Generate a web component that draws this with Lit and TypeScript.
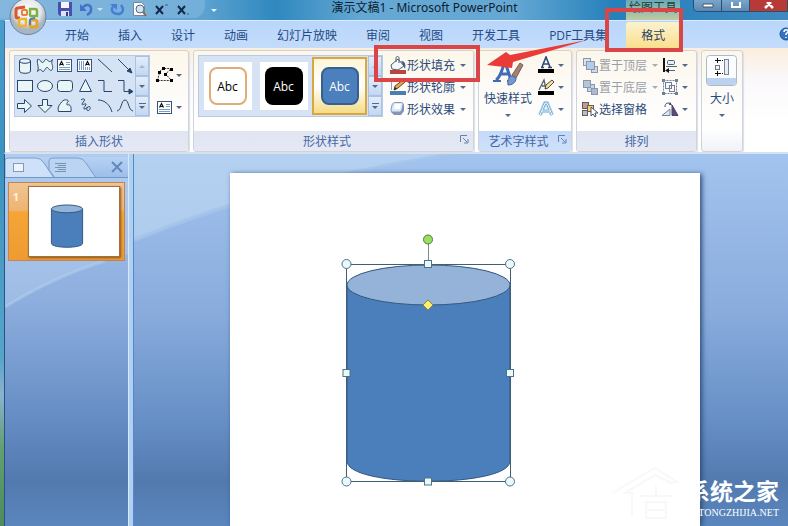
import { LitElement, html, svg, css, SVGTemplateResult, TemplateResult } from "lit";
import { customElement, property, state } from "lit/decorators.js";
import { classMap } from "lit/directives/class-map.js";

const icon = (w: number, h: number, body: SVGTemplateResult) =>
  html`<svg width=${w} height=${h} viewBox="0 0 ${w} ${h}" aria-hidden="true">${body}</svg>`;

const textLines = svg`<rect x="2.500" y="3.500" width="14" height="12" fill="#fff" stroke="#33557f"/>
  <path d="M4 11.500h11M4 13.500h11M11 6.500h4M11 8.500h4" stroke="#7c9cc4"/>
  <path d="M4.500 9.500l2-4 2 4M5.500 8.500h2" fill="none" stroke="#111" stroke-width="1.200"/>`;

const shapes: { name: string; art: SVGTemplateResult }[] = [
  { name: "圆柱形", art: svg`<path d="M4.500 5v10c0 3 11 3 11 0V5c0-3-11-3-11 0c0 3 11 3 11 0"/>` },
  { name: "波形", art: svg`<path d="M2.500 3.500c3-1 3 3 5 3s2-4 4-3s3 4 6 0c-2 4 1 6 0 9c-1 4-3 1-5-1c-2-1-3 5-5 4c-1-2-3-3-5 0c2-5-1-8 0-12z"/>` },
  { name: "文本框", art: textLines },
  { name: "垂直文本框", art: svg`<rect x="2.500" y="3.500" width="14" height="12" fill="#fff" stroke="#33557f"/>
    <path d="M4.500 5v9M6.500 5v9M8.500 5v9M10.500 11v3M12.500 11v3M14.500 11v3" stroke="#7c9cc4"/>
    <path d="M10.500 9.500l2-4 2 4M11.500 8.500h2" fill="none" stroke="#111" stroke-width="1.200"/>` },
  { name: "直线", art: svg`<path fill="none" d="M3 3l14 13"/>` },
  { name: "箭头", art: svg`<path fill="none" d="M3 3l12 12"/><path d="M17 17l-5-2 3-3z" fill="#26466f"/>` },
  { name: "矩形", art: svg`<rect x="2.500" y="4.500" width="15" height="11"/>` },
  { name: "椭圆", art: svg`<ellipse cx="10" cy="10" rx="7.500" ry="5.500"/>` },
  { name: "圆角矩形", art: svg`<rect x="2.500" y="4.500" width="15" height="11" rx="3"/>` },
  { name: "等腰三角形", art: svg`<path d="M10.500 3.500l6 12h-12z"/>` },
  { name: "肘形连接符", art: svg`<path fill="none" d="M3 4.500h6v11h8"/>` },
  { name: "肘形箭头连接符", art: svg`<path fill="none" d="M3 4.500h6v11h5"/><path d="M18 15.500l-4-2.500v5z" fill="#26466f"/>` },
  { name: "右箭头", art: svg`<path d="M2.500 7.500h7v-4l7 6.500-7 6.500v-4h-7z"/>` },
  { name: "下箭头", art: svg`<path d="M7.500 3.500h5v6h4.500l-7 7-7-7h4.500z"/>` },
  { name: "任意多边形", art: svg`<path d="M5.500 7.500c3-5 7-4 8-2.500c-2 2-2 4-1 4c3-1 4 2 3.500 6.500h-12.500c-1-3 0-6 2-8z"/>` },
  { name: "自由曲线", art: svg`<path fill="none" d="M6 4c2-2 5-1 3 1l-2 3c0 2 3-1 4 0s-3 3-2 5c1 1 5-4 6-2s-2 5-3 3 1-3 0-3"/>` },
  { name: "弧形", art: svg`<path fill="none" d="M3 4c7 0 12 5 14 12"/>` },
  { name: "曲线", art: svg`<path fill="none" d="M2 15c5-1 4-11 8-11s3 10 8 11"/>` },
];

const bucket = icon(18, 18, svg`<path d="M2 9l7-6 6 7-6 4-6-1z" fill="#f3f6fa" stroke="#4b5a6e"/>
  <path d="M7 6V2c0-2 3-2 3 0v5" fill="none" stroke="#4b5a6e"/><path d="M12 5c4 0 5 3 4 8l-2-4z" fill="#435d86"/>
  <path d="M1 14h16v4H1z" fill="#b9453f"/>`);
const outline = icon(18, 18, svg`<path d="M2.500 12V3.500H14" fill="none" stroke="#8da5c4"/>
  <path d="M5 12l1-4 8-6 2 2-7 6z" fill="#f0a548" stroke="#5b4630"/><path d="M5 12l1-3 2 2z" fill="#222"/>
  <path d="M1 13h16v4H1z" fill="#4a7eae"/>`);
const effect = icon(18, 18, svg`<path d="M2 12l3 3h7l3-4V4z" fill="#4d6796" opacity=".7"/>
  <path d="M5.500 2.500h7q2 0 1.500 2l-1 5q-.5 2-2.500 2.500h-7q-2 0-1.500-2l1-5q.5-2 2.500-2.500z" fill="#dce8f8" stroke="#8299c1"/><path d="M6 4h6l-1 5H5z" fill="#fff"/>`);
const textFill = icon(18, 18, svg`<path d="M5 11l4-10 4 10M6 8h6M4 11.500h3M11 11.500h4" fill="none" stroke="#2e4b7c" stroke-width="1.600"/><path d="M1 13h16v4H1z" fill="#000"/>`);
const textOutline = icon(18, 18, svg`<path d="M2 12L7 2l2 9M5 8h5" fill="none" stroke="#59616c" stroke-width="1.300"/>
  <path d="M8 11l1-4 6-5 2 2-6 6z" fill="#f4dfa6" stroke="#5b4630"/><path d="M1 13h16v4H1z" fill="#000"/>`);
const textEffect = icon(18, 18, svg`<path d="M3 15L8 3h2l5 12M5 11h8" fill="none" stroke="#a9d2ec" stroke-width="4" stroke-linejoin="round"/>
  <path d="M3 15L8 3h2l5 12M5 11h8" fill="none" stroke="#5f9dc9" stroke-width="2"/><path d="M3 15L8 3h2l5 12M5 11h8" fill="none" stroke="#fff" stroke-width="1"/>`);
const bringFront = icon(18, 18, svg`<g stroke="#8797ad"><rect x="2.500" y="2.500" width="7" height="7" fill="#dde3ec"/>
  <rect x="10.500" y="10.500" width="6" height="6" fill="#d3dae5"/><rect x="5.500" y="5.500" width="8" height="8" fill="#b4cbea"/></g>`);
const sendBack = icon(18, 18, svg`<g stroke="#8797ad"><rect x="6.500" y="6.500" width="7" height="7" fill="#c2d3ea"/>
  <rect x="2.500" y="2.500" width="7" height="7" fill="#b7c5d9"/><rect x="10.500" y="10.500" width="6" height="6" fill="#a9bad2"/></g>`);
const selectPane = icon(18, 18, svg`<g stroke="#665a5a"><rect x="1.500" y="2.500" width="6" height="6" fill="#bd9a9f"/>
  <rect x="1.500" y="10.500" width="5" height="5" fill="#b5bdc9"/><rect x="6.500" y="5.500" width="6" height="6" fill="#ffcf62"/></g>
  <path d="M10 7v9l2-2 2 3 1-1-1-3h3z" fill="#fff" stroke="#46556b"/>`);
const align = icon(18, 18, svg`<path d="M3 2v14" stroke="#111" stroke-width="2"/><rect x="6.500" y="4.500" width="7" height="4" rx="1" fill="#e8eef7" stroke="#4d6283"/>
  <path d="M5 10.500h11M8 14.500h6" stroke="#4d6283"/><path d="M4 14.500l4-2.500v5z" fill="#111"/>`);
const groupIcon = icon(18, 18, svg`<g fill="none" stroke="#6c7f9b"><path d="M2.500 2.500h13v13h-13z" stroke-dasharray="2 1"/><rect x="4.500" y="4.500" width="6" height="6"/><rect x="8.500" y="7.500" width="5" height="6"/></g>
  <path d="M1 1h3v3H1zM14 1h3v3h-3zM1 14h3v3H1zM14 14h3v3h-3z" fill="#6c7f9b"/>`);
const rotateIcon = icon(18, 18, svg`<path d="M1 15.500h8V9z" fill="#dce5f0" stroke="#74849b"/><path d="M11 15.500h6L11 5z" fill="#5c4a80" stroke="#4a4268"/><path d="M4 7c0-4 3-5 6-3" fill="none" stroke="#334866"/><path d="M11 5L9 2 8 5z" fill="#334866"/>`);
const editPoints = icon(18, 18, svg`<path d="M2.500 14.500L5 5l3-2.500h8.500l-6 5.500 6 6.500z" fill="none" stroke="#333" stroke-dasharray="2 1"/>
  <path d="M1 13h3v3H1zM3 5h3v3H3zM7 1h3v3H7zM15 2h3v3h-3zM9 7h3v3H9zM15 13h3v3h-3z" fill="#000"/>`);
const textBox = icon(18, 18, textLines);
const wordArt = icon(32, 32, svg`<path d="M4 25c5-3 6-12 9-18l6 18M8 19h9" fill="none" stroke="#3f6db5" stroke-width="3"/>
  <path d="M1 26h8M15 26h7" stroke="#3f6db5" stroke-width="2"/>
  <path d="M20 20L28 8l3 2-7 13z" fill="#a5806c" stroke="#77605a"/><path d="M16 30c-1-6 2-10 5-9l3 2c0 5-4 7-8 7z" fill="#7797cf" stroke="#49659e"/>`);
const sizeIcon = icon(32, 32, svg`<rect x=".5" y=".5" width="30" height="30" rx="3" fill="#fbfcfe" stroke="#aab9cf"/><path d="M1 23h29v4q0 3-3 3H4q-3 0-3-3z" fill="#bcd2ee"/>
  <path d="M14 5.500h5M14 18.500h5" stroke="#111" stroke-dasharray="1 1"/><path d="M9 5.500h5M11.500 3v5M9 18.500h5M11.500 16v5" stroke="#111"/>
  <rect x="9.500" y="10.500" width="4" height="4" fill="#eef3fa" stroke="#777"/><rect x="18.500" y="4.500" width="4" height="15" fill="#e8eef6" stroke="#7a8798"/>`);
const launcher = icon(9, 9, svg`<path d="M.5 7V.5H7M3 3l4 4M8 4v4H4" fill="none" stroke="#6482ad"/>`);

const quickIcons: { name: string; art: TemplateResult }[] = [
  { name: "保存", art: icon(16, 16, svg`<path d="M1 1h14v14H3l-2-2z" fill="#4a4fae"/><path d="M4 1h8v6H4z" fill="#f4f6ff"/><path d="M4 10h8v5H4z" fill="#dfe4f2"/><path d="M9 11h2v4H9z" fill="#333c86"/>`) },
  { name: "撤消", art: icon(24, 16, svg`<path d="M3 8c3-6 10-5 9 1c0 3-2 4-4 5" fill="none" stroke="#3f74cd" stroke-width="2.500"/><path d="M1 3v7h7z" fill="#3f74cd"/><path d="M18 7h6l-3 3z" fill="#c9e4f7"/>`) },
  { name: "恢复", art: icon(16, 16, svg`<path d="M5 4c-5 6 0 9 4 9s7-4 3-9" fill="none" stroke="#4580d4" stroke-width="2.500"/><path d="M1 3h7v6z" fill="#4580d4"/>`) },
  { name: "打印预览", art: icon(16, 16, svg`<path d="M2.500 1.500h8l3 3v10h-11z" fill="#fff" stroke="#7a8797"/><circle cx="9" cy="8" r="4" fill="#cfe5f6" stroke="#53697f"/><path d="M12 11l3 4" stroke="#8c6a43" stroke-width="2"/>`) },
  { name: "上标", art: icon(16, 16, svg`<path d="M3 5l7 8M10 5l-7 8" stroke="#122a48" stroke-width="2"/><path d="M12 4h3" stroke="#335d91"/>`) },
  { name: "下标", art: icon(16, 16, svg`<path d="M3 5l7 8M10 5l-7 8" stroke="#122a48" stroke-width="2"/><path d="M12 13h2" stroke="#335d91"/>`) },
];

// A can drawn in a 470 x 353 slide; shared by the slide and its thumbnail.
const can = svg`<path d="M117 112v176c0 27 163 27 163 0V112z" fill="#4a7fbc" stroke="#31577f"/>
  <ellipse cx="198.500" cy="112" rx="81.500" ry="20" fill="#95b2d8" stroke="#31577f"/>`;

@customElement("ribbon-group")
class RibbonGroup extends LitElement {
  @property() label = "";
  @property({ type: Boolean }) launch = false;
  @property({ type: Boolean, reflect: true }) hot = false;
  static styles = css`
    :host { display: flex; flex-direction: column; box-sizing: border-box; height: 102px; border: 1px solid #cfd3da; border-radius: 3px;
      background: linear-gradient(#fdf7ea, #fdfbf8 40%, #fff 78%, #f0f2f8); box-shadow: 1px 1px 1px #dcdfe6; overflow: hidden; }
    .body { flex: 1; display: flex; align-items: flex-start; padding: 3px 4px 0; min-height: 0; }
    footer { display: flex; align-items: center; justify-content: center; height: 20px; background: linear-gradient(#dfe5f1, #e6e9f5); color: #4668a4; font-size: 12px; }
    :host([hot]) footer { background: linear-gradient(#c4dafa, #cfe1fb); }
    span { flex: 1; text-align: center; }
    button { border: 0; padding: 0; margin: 0 4px 4px 0; background: none; line-height: 0; }
  `;
  render() {
    return html`<div class="body"><slot></slot></div>
      ${this.label ? html`<footer><span>${this.label}</span>${this.launch ? html`<button aria-label="${this.label}设置">${launcher}</button>` : ""}</footer>` : ""}`;
  }
}

@customElement("app-root")
class AppRoot extends LitElement {
  @state() private tab = "格式";
  @state() private style_ = 2;

  static styles = css`
    :host { display: flex; flex-direction: column; position: relative; box-sizing: border-box; min-height: 100vh; overflow: hidden; padding-left: 4px;
      background: linear-gradient(#4aa0cd, #3b93c0 30%, #56a5c8 68%, #8cb2cf 75%, #62a070 85%, #4c8b5b);
      font-family: "Open Sans", "Noto Sans CJK SC", sans-serif; font-size: 12px; color: #2a4a7a; }
    svg { display: block; flex: none; }
    button { font: inherit; color: inherit; border: 0; padding: 0; margin: 0; background: none; display: flex; align-items: center; white-space: nowrap; }
    .caret { flex: none; border: 3px solid transparent; border-top-color: #52698d; border-bottom: 0; margin: 0 3px; }

    .titlebar { display: flex; height: 20px; margin-left: -4px; background: linear-gradient(90deg, #7bb2da, #5ba2d0 26%, #2f88bf 35%, #66a8d4 46%, #65a8d4 65%, #2580bb 78%, #3e8ac0); }
    .quick { display: flex; gap: 6px; align-items: center; height: 18px; padding: 0 14px 0 57px; border-radius: 0 0 12px 0; background: #8cbce180; }
    .more { padding: 0 6px; }
    .more .caret { border-top-color: #e8f4fc; margin: 0; }
    h1 { flex: 1; margin: 0; text-align: center; font-family: "Noto Sans", "Noto Sans CJK SC", sans-serif; font-size: 12px; font-weight: 400; line-height: 16px; color: #0c1c2e; }
    .context { width: 54px; text-align: center; line-height: 16px; color: #24402e; background: linear-gradient(#68a9bd, #c0cba0); }
    .window { display: flex; height: 11px; margin-left: 13px; border: 1px solid #2b4d70; border-top: 0; border-right: 0; border-radius: 0 0 0 5px; overflow: hidden; }
    .window button { width: 28px; height: 11px; justify-content: center; background: linear-gradient(#7ba6ca, #5a88b3); border-right: 1px solid #2b4d70; }
    .window .close { width: 38px; background: #b83a36; padding-right: 0; }

    .tabs { display: flex; align-items: flex-end; height: 28px; padding-left: 46px; border-top: 1px solid #dcecfc; border-left: 1px solid #3d6ea5; background: linear-gradient(#b8d6fb, #c4dcfb); box-sizing: border-box; }
    .tabs button { height: 26px; padding: 0 14px; color: #234a86; margin-right: 1px; }
    .tabs .active { margin-left: 4px; padding: 0 15px; border-radius: 3px 3px 0 0; background: linear-gradient(#fbf2cf, #fbdf8d); color: #2c4463; }
    .help { margin-left: auto; }
    .tabs .help { padding: 0; margin-right: -5px; }

    .ribbon { display: flex; gap: 4px; height: 106px; padding: 2px 4px 0; box-sizing: border-box; background: linear-gradient(#fbeedd, #faf8fb 30%, #fff 70%); border-bottom: 2px solid #d4e2f2; border-left: 1px solid #3d6ea5; }
    .g-shapes { width: 180px; } .g-styles { width: 281px; } .g-art { width: 94px; } .g-arrange { width: 121px; } .g-size { width: 42px; }
    .gallery { display: flex; box-sizing: border-box; height: 62px; margin-top: 1px; border: 1px solid #b9cbe4; background: #d5e3f5; }
    .grid { display: grid; grid-template-columns: repeat(6, 20px); grid-auto-rows: 20px; }
    .grid svg { fill: #eaf6f6; stroke: #26466f; }
    .scroll { display: grid; grid-template-rows: repeat(3, 20px); width: 14px; }
    .scroll button { justify-content: center; border: 1px solid #a9c1e2; background: linear-gradient(#e3edfa, #c3d7f3); }
    .scroll .caret { margin: 0; }
    .scroll button:first-child .caret { transform: rotate(180deg); opacity: .35; }
    .scroll button:last-child { flex-direction: column; gap: 2px; }
    .scroll button:last-child::before { content: ""; width: 7px; height: 1px; background: #52698d; }
    .side { display: flex; flex-direction: column; gap: 14px; padding: 12px 0 0 5px; }
    .swatches { gap: 1px; padding-left: 1px; }
    .swatch { width: 55px; height: 58px; justify-content: center; margin-top: 1px; border: 2px solid transparent; box-sizing: border-box; }
    .swatch.chosen { border-color: #d9a73f; background: linear-gradient(#fff5d8, #fff, #f4dc85); }
    .frame { display: grid; place-items: center; width: 48px; height: 48px; background: #fff; }
    .chosen .frame { background: none; }
    .chip { box-sizing: border-box; width: 38px; height: 38px; display: grid; place-items: center; border-radius: 8px; font-size: 12px; }
    .light { border: 2px solid #dfad77; background: #fff; color: #000; }
    .dark { background: #000; color: #fff; }
    .blue { border: 2px solid #38608e; background: #4b7fbd; color: #fff; }
    .rows { display: flex; flex-direction: column; }
    .rows button { height: 22px; }
    .rows .off { color: #9a9ea6; }
    .rows .off .caret { border-top-color: #a9adb4; }
    .rows span + .caret { margin-left: 5px; }
    .fills { padding-left: 6px; }
    .big { flex-direction: column; width: 48px; margin-left: 1px; }
    .big svg { margin-top: 1px; }
    .big span { line-height: 18px; padding: 3px 0 6px; }
    .big .caret { padding: 0; }
    .g-size .big { width: 32px; margin-left: 0; }
    .art-rows { padding-left: 5px; }

    main { flex: 1; display: flex; min-height: 0; border-left: 1px solid #2b5288; }
    .pane { position: relative; width: 123px; padding-top: 3px; border-right: 1px solid #d7e9fb; background: linear-gradient(#a6c6ee, #8fb0df 38%, #678ec5 70%, #527aaf 88%, #5a86be); }
    .pane-tabs { display: flex; align-items: stretch; justify-content: space-between; height: 20px; border-bottom: 1px solid #4f79b5; background: linear-gradient(#b1cff3, #8eb2e4); overflow: hidden; }
    .pane-tabs button { padding: 0 4px 0 0; }
    .thumb { position: relative; display: flex; margin: 4px 3px; padding: 3px 4px 4px 0; border: 1px solid #c08553; background: linear-gradient(#efc593, #eeb473 35%, #f5a536 38%, #ee9b31); box-sizing: border-box; height: 79px; align-items: stretch; }
    .thumb b { width: 14px; font-size: 11px; color: #fff3d2; margin-top: 4px; align-self: flex-start; text-align: center; line-height: 14px; }
    .thumb svg { flex: 1; min-width: 0; margin-left: 5px; height: 71px; background: #fff; border: 1px solid #a2703c; box-sizing: border-box; box-shadow: 1px 1px 2px #8d5621; }
    .splitter { width: 4px; background: #b0d0f3; border-right: 1px solid #5586c8; }
    .work { flex: 1; display: flex; justify-content: center; align-items: flex-start; padding: 19px 0 0 8px; min-width: 0; background: linear-gradient(#a3c4ee, #8aacdd 42%, #668fc6 72%, #527aaf 88%, #5a86be); position: relative; }
    .wave { position: absolute; left: 0; top: 0; }
    .slide { position: relative; width: 73%; max-width: 470px; aspect-ratio: 470 / 353; background: #fff; box-shadow: 2px 1px 5px #2b4b78; }
    .slide svg { width: 100%; height: auto; }
    .orb { position: absolute; left: 8px; top: -3px; }
    .callouts { position: absolute; left: 0; top: 0; pointer-events: none; }
    .mark { position: absolute; right: 9px; bottom: 7px; display: flex; flex-direction: column; align-items: flex-end; color: #fff; }
    .mark b { font: 700 23px/34px "Noto Sans CJK SC", sans-serif; }
    .mark span { font: 10px/12px "Liberation Serif", serif; }
    .house { position: absolute; right: 88px; bottom: 0; }
  `;

  private caret = html`<span class="caret"></span>`;

  private row(label: string, art: TemplateResult, off = false, caret = true) {
    return html`<button class=${classMap({ off })} aria-label=${label}>${art}<span>${label}</span>${caret ? html`<span class="caret"></span>` : ""}</button>`;
  }
  private small(name: string, art: TemplateResult) {
    return html`<button aria-label=${name}>${art}${this.caret}</button>`;
  }
  private scroller() {
    return html`<div class="scroll">${["上一行", "下一行", "其他"].map((n) => html`<button aria-label=${n}>${this.caret}</button>`)}</div>`;
  }

  render() {
    const tabs = ["开始", "插入", "设计", "动画", "幻灯片放映", "审阅", "视图", "开发工具", "PDF工具集", "格式"];
    return html`
      <header class="titlebar">
        <div class="quick">${quickIcons.map((q) => html`<button aria-label=${q.name}>${q.art}</button>`)}</div>
        <button class="more" aria-label="自定义快速访问工具栏">${this.caret}</button>
        <h1>演示文稿1 - Microsoft PowerPoint</h1>
        <div class="context">绘图工具</div>
        <div class="window">
          <button aria-label="最小化">${icon(12, 8, svg`<path d="M1 2h10v3H1z" fill="#fff" stroke="#456"/>`)}</button>
          <button aria-label="最大化">${icon(12, 8, svg`<path d="M2 0v5h8V0" fill="none" stroke="#fff" stroke-width="2"/>`)}</button>
          <button class="close" aria-label="关闭">${icon(12, 8, svg`<path d="M2 6l4-4 4 4M4 0l2 2 2-2" fill="none" stroke="#fff" stroke-width="2.500"/>`)}</button>
        </div>
      </header>
      <nav class="tabs">
        ${tabs.map((t) => html`<button class=${classMap({ active: t === this.tab })} @click=${() => (this.tab = t)}>${t}</button>`)}
        <button class="help" aria-label="帮助">${icon(14, 26, svg`<circle cx="7" cy="12" r="6" fill="#3774bf" stroke="#23528f"/><path d="M5 10c0-3 5-3 4 0l-2 2v1M7 15v1" fill="none" stroke="#fff" stroke-width="1.500"/>`)}</button>
      </nav>
      <section class="ribbon">
        <ribbon-group class="g-shapes" label="插入形状">
          <div class="gallery"><div class="grid">${shapes.map((s) => html`<button aria-label=${s.name}>${icon(20, 20, s.art)}</button>`)}</div>${this.scroller()}</div>
          <div class="side">${this.small("编辑形状", editPoints)}${this.small("文本框", textBox)}</div>
        </ribbon-group>
        <ribbon-group class="g-styles" label="形状样式" launch>
          <div class="gallery swatches">
            ${["light", "dark", "blue"].map((c, i) => html`<button class=${classMap({ swatch: true, chosen: i === this.style_ })} @click=${() => (this.style_ = i)}>
              <span class="frame"><span class="chip ${c}">Abc</span></span></button>`)}
            ${this.scroller()}
          </div>
          <div class="rows fills">${this.row("形状填充", bucket)}${this.row("形状轮廓", outline)}${this.row("形状效果", effect)}</div>
        </ribbon-group>
        <ribbon-group class="g-art" label="艺术字样式" launch hot>
          <button class="big">${wordArt}<span>快速样式</span>${this.caret}</button>
          <div class="rows art-rows">${this.small("文本填充", textFill)}${this.small("文本轮廓", textOutline)}${this.small("文本效果", textEffect)}</div>
        </ribbon-group>
        <ribbon-group class="g-arrange" label="排列">
          <div class="rows">${this.row("置于顶层", bringFront, true)}${this.row("置于底层", sendBack, true)}${this.row("选择窗格", selectPane, false, false)}</div>
          <div class="rows">${this.small("对齐", align)}${this.small("组合", groupIcon)}${this.small("旋转", rotateIcon)}</div>
        </ribbon-group>
        <ribbon-group class="g-size"><button class="big">${sizeIcon}<span>大小</span>${this.caret}</button></ribbon-group>
      </section>
      <main>
        <aside class="pane">
          <svg class="wave" width="123" height="160" aria-hidden="true"><path d="M0 0H123V100Q60 116 0 153z" fill="#c3daf4" opacity=".3"/><path d="M0 153Q50 122 100 107" fill="none" stroke="#c3daf4" stroke-width="3" opacity=".35"/></svg>
          <div class="pane-tabs">
            <button aria-label="幻灯片和大纲">${icon(96, 21, svg`<path d="M0 21V3q0-2 3-2h28q5 0 8 5l10 15z" fill="#d3e4f9" stroke="#5a82ba"/>
              <path d="M44 13V4q0-3 3-3h26q5 0 8 5l10 15H50z" fill="#b9d2f2" stroke="#5a82ba"/><rect x="8.500" y="6.500" width="10" height="8" fill="#fff" stroke="#6f7f92"/>
              <path d="M50 6.500h11M53 8.500h8M50 10.500h11M53 12.500h8M50 14.500h11" stroke="#5a7194"/>`)}</button>
            <button aria-label="关闭窗格">${icon(14, 14, svg`<path d="M2 2l10 10M12 2L2 12" stroke="#3a66a4" stroke-width="2"/>`)}</button>
          </div>
          <div class="thumb"><b>1</b><svg viewBox="0 0 470 353" preserveAspectRatio="none" role="img" aria-label="幻灯片 1"><g stroke-width="5">${can}</g></svg></div>
        </aside>
        <div class="splitter"></div>
        <section class="work">
          <svg class="wave" width="320" height="90" aria-hidden="true"><path d="M0 0H320Q150 25 0 86z" fill="#c5dcf4" opacity=".55"/><path d="M320 0Q150 25 0 86" fill="none" stroke="#a5c4ea" stroke-width="4" opacity=".8"/></svg>
          <div class="slide">
            <svg viewBox="0 0 470 353" role="img" aria-label="圆柱形">${can}
              <rect x="116.500" y="91.500" width="164" height="217" fill="none" stroke="#3f6072"/>
              <path d="M198.500 71v20" stroke="#7d8d8f"/>
              <circle cx="198" cy="66.500" r="4.500" fill="#9ade66" stroke="#4c7f2e"/>
              <g fill="#eaf8fb" stroke="#4d7484">
                ${[[116.5, 91], [280, 91], [116.5, 308.5], [280, 308.5]].map(([x, y]) => svg`<circle cx=${x} cy=${y} r="4.500"/>`)}
                ${[[198, 91], [116.5, 200], [280, 200], [198, 308.5]].map(([x, y]) => svg`<rect x=${x - 3.5} y=${y - 3.5} width="7" height="7"/>`)}
              </g>
              <path d="M198 127l5 5-5 5-5-5z" fill="#fbf06d" stroke="#8d8444"/>
            </svg>
          </div>
        </section>
      </main>
      <svg class="orb" width="39" height="39" aria-hidden="true">
        <defs><radialGradient id="o" cx=".5" cy=".35"><stop offset="0" stop-color="#fff"/><stop offset=".7" stop-color="#e3e8ee"/><stop offset="1" stop-color="#a9b5c2"/></radialGradient></defs>
        <circle cx="20" cy="19.500" r="18" fill="url(#o)" stroke="#6f8296"/>
        <g fill="none" stroke-width="3"><path d="M17 10l-7 1q-2 0-2 2v6q0 2 2 2h2" stroke="#d9572b"/><rect x="14" y="13" width="5" height="5" rx="1" stroke="#e8803a" stroke-width="2"/>
        <path d="M22 12h5q2 0 2 2v5h-6q-1 0-1-1z" stroke="#7bb342" stroke-width="2.500"/>
        <path d="M18 22h-5q-2 0-2 2v5h6q1 0 1-1z" stroke="#f0b32e" stroke-width="2.500"/><rect x="22" y="23" width="7" height="7" rx="2" stroke="#e2a42a"/><path d="M22 22l5-1M22 22v6" stroke="#4a7fc8" stroke-width="2"/></g>
      </svg>
      <svg class="callouts" width="700" height="90" aria-hidden="true">
        <path d="M487 65l19-13 4 3 77-15-74 22-1 6z" fill="#ea3b38"/>
        <g fill="none" stroke="#da4547" stroke-width="4"><rect x="376" y="47" width="102" height="33"/><rect x="607" y="10" width="74" height="40"/></g>
      </svg>
      <svg class="house" width="90" height="60" aria-hidden="true"><path d="M2 27L45 2l22 14-6 1-16-8-30 18h7v24M30 30h32M46 20v10M36 36h20v16H36zM36 44h20" fill="none" stroke="#808a94" stroke-width="2" opacity=".06"/></svg>
      <div class="mark"><b>系统之家</b><span>XITONGZHIJIA.NET</span></div>`;
  }
}
